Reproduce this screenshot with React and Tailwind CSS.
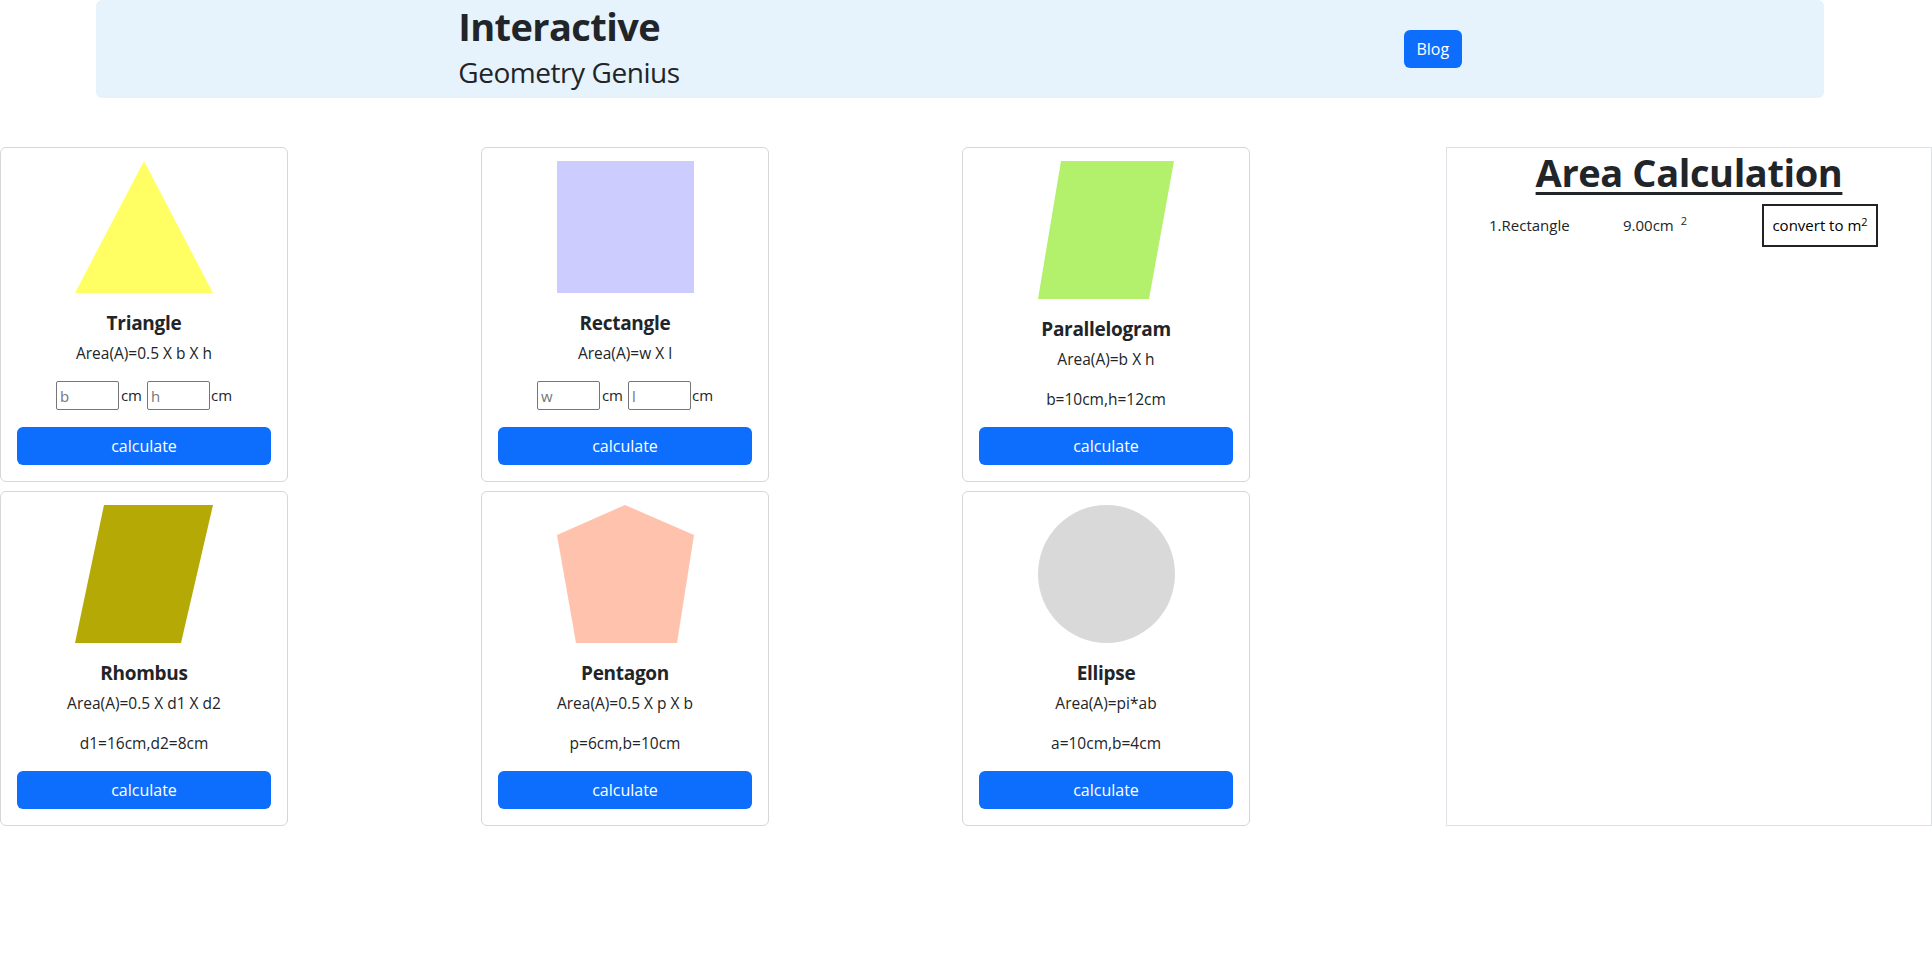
import React from "react";

const FONT = { fontFamily: '"Open Sans", "Noto Sans", sans-serif' };

function Card({ imgH, shape, title, formula, children, paramsMt }) {
  return (
    <div className="w-[288px] h-[335px] border border-[#d6d6d6] rounded-[6px] bg-white flex flex-col items-center px-4 pb-4">
      <div className="mt-[13px] flex justify-center" style={{ height: imgH }}>
        {shape}
      </div>
      <div className="mt-[18px] h-[24px] leading-[24px] text-[19px] tracking-[-0.3px] font-bold text-[#212529] whitespace-nowrap">{title}</div>
      <div className="mt-[8px] h-[21px] leading-[21px] text-[15.5px] text-[#212529] whitespace-nowrap">{formula}</div>
      <div className={paramsMt}>{children}</div>
      <button className="mt-auto w-full h-[38px] rounded-[6px] bg-[#0d6efd] text-white text-[16px] leading-[24px]">
        calculate
      </button>
    </div>
  );
}

function Inputs({ a, b }) {
  return (
    <div className="flex items-center text-[15px] text-[#212529] h-[29px]">
      <input
        placeholder={a}
        className="w-[63px] h-[29px] border border-[#767676] rounded-[2px] px-[3px] text-[15px] placeholder-[#757575] outline-none"
      />
      <span className="ml-[2px]">cm</span>
      <input
        placeholder={b}
        className="ml-[5px] w-[63px] h-[29px] border border-[#767676] rounded-[2px] px-[3px] text-[15px] placeholder-[#757575] outline-none"
      />
      <span className="ml-[1px]">cm</span>
    </div>
  );
}

function Params({ text }) {
  return <div className="h-[21px] leading-[21px] text-[15.5px] text-[#212529] whitespace-nowrap">{text}</div>;
}

export default function App() {
  return (
    <div className="w-[1932px] min-h-[963px] bg-white" style={FONT}>
      {/* Header */}
      <div className="mx-[96px] w-[1728px] h-[98px] bg-[#e6f3fc] rounded-[6px] flex items-center justify-around">
        <div className="w-[221px] h-[98px] flex flex-col text-[#212529]">
          <div className="text-[38px] tracking-[-0.6px] font-bold leading-[48px] whitespace-nowrap mt-[2px]">Interactive</div>
          <div className="text-[28px] tracking-[-0.45px] font-medium leading-[34px] whitespace-nowrap mt-[5px]">Geometry Genius</div>
        </div>
        <div className="w-[58px] flex justify-center">
          <button className="w-[58px] h-[38px] rounded-[6px] bg-[#0d6efd] text-white text-[16px] leading-[24px]">
            Blog
          </button>
        </div>
      </div>

      {/* Main */}
      <div className="mt-[49px] flex">
        <div className="w-[1446px] grid grid-cols-[481px_481px_481px] gap-y-[9px] content-start">
          <Card
            imgH={132}
            title="Triangle"
            formula="Area(A)=0.5 X b X h"
            paramsMt="mt-[17px]"
            shape={
              <svg width="138" height="132" viewBox="0 0 138 132">
                <polygon points="69,0 138,132 0,132" fill="#ffff63" />
              </svg>
            }
          >
            <Inputs a="b" b="h" />
          </Card>
          <Card
            imgH={132}
            title="Rectangle"
            formula="Area(A)=w X l"
            paramsMt="mt-[17px]"
            shape={<div className="w-[137px] h-[132px] bg-[#ccccff]" />}
          >
            <Inputs a="w" b="l" />
          </Card>
          <Card
            imgH={138}
            title="Parallelogram"
            formula="Area(A)=b X h"
            paramsMt="mt-[19px]"
            shape={
              <svg width="136" height="138" viewBox="0 0 136 138">
                <polygon points="23,0 136,0 111,138 0,138" fill="#b3f06c" />
              </svg>
            }
          >
            <Params text="b=10cm,h=12cm" />
          </Card>
          <Card
            imgH={138}
            title="Rhombus"
            formula="Area(A)=0.5 X d1 X d2"
            paramsMt="mt-[19px]"
            shape={
              <svg width="138" height="138" viewBox="0 0 138 138">
                <polygon points="29,0 138,0 106,138 0,138" fill="#b5a906" />
              </svg>
            }
          >
            <Params text="d1=16cm,d2=8cm" />
          </Card>
          <Card
            imgH={138}
            title="Pentagon"
            formula="Area(A)=0.5 X p X b"
            paramsMt="mt-[19px]"
            shape={
              <svg width="137" height="138" viewBox="0 0 137 138">
                <polygon points="68,0 137,30 120,138 19,138 0,30" fill="#ffc2ad" />
              </svg>
            }
          >
            <Params text="p=6cm,b=10cm" />
          </Card>
          <Card
            imgH={138}
            title="Ellipse"
            formula="Area(A)=pi*ab"
            paramsMt="mt-[19px]"
            shape={
              <svg width="137" height="138" viewBox="0 0 137 138">
                <ellipse cx="68.5" cy="69" rx="68.5" ry="69" fill="#d9d9d9" />
              </svg>
            }
          >
            <Params text="a=10cm,b=4cm" />
          </Card>
        </div>

        {/* Area panel */}
        <div className="flex-1 h-[679px] border border-[#dee2e6] bg-white">
          <div className="text-center text-[38px] tracking-[-0.4px] font-bold leading-[48px] text-[#212529] underline decoration-[3px] underline-offset-[5px]">
            Area Calculation
          </div>
          <div className="mt-[8px] pl-[42px] flex items-center h-[43px] text-[15px] text-[#212529]">
            <div className="w-[134px] whitespace-nowrap">1.Rectangle</div>
            <div className="w-[139px] flex items-start">
              <span>9.00cm</span>
              <span className="ml-[7px] text-[11px] leading-[11px] mt-[1px]">2</span>
            </div>
            <button className="w-[116px] h-[43px] border-2 border-[#222] bg-white text-[15px] text-black flex items-center justify-center whitespace-nowrap">
              <span>convert to m</span>
              <span className="text-[11px] leading-[11px] -mt-[8px]">2</span>
            </button>
          </div>
        </div>
      </div>
    </div>
  );
}
